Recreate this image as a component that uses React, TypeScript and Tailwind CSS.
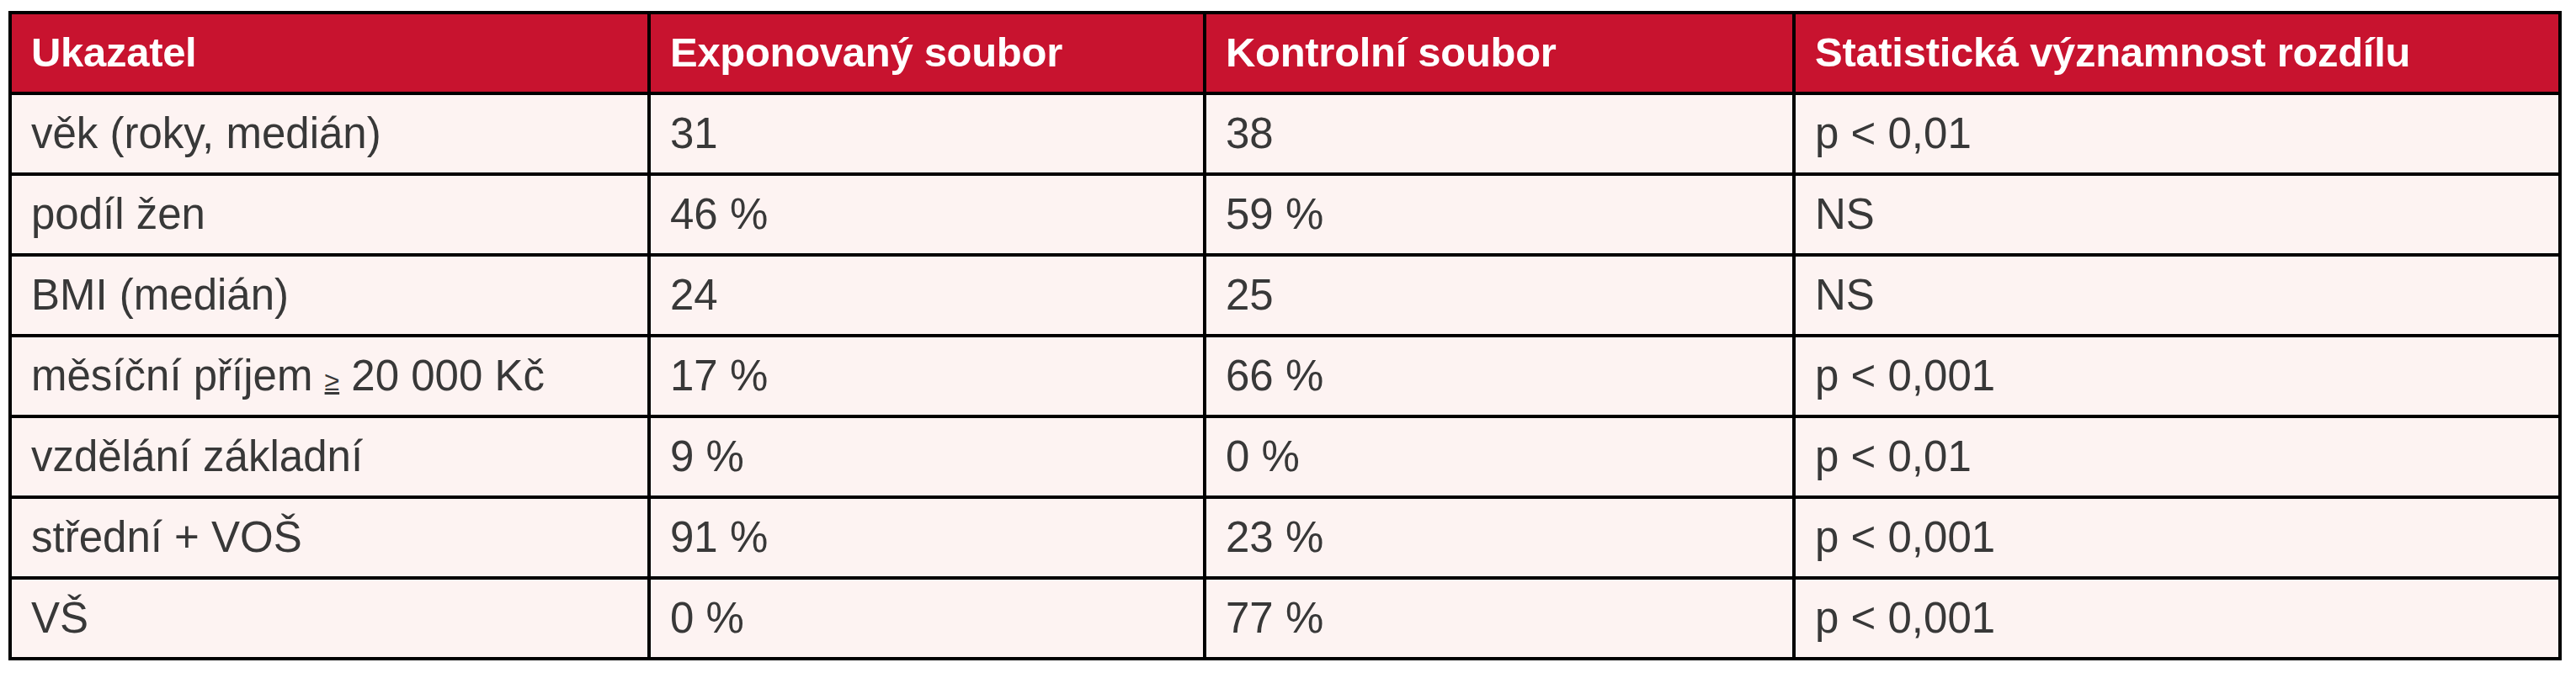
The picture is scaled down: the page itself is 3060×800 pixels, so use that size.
const header = ["Ukazatel", "Exponovaný soubor", "Kontrolní soubor", "Statistická významnost rozdílu"];

const rows: [React.ReactNode, string, string, string][] = [
  ["věk (roky, medián)", "31", "38", "p < 0,01"],
  ["podíl žen", "46 %", "59 %", "NS"],
  ["BMI (medián)", "24", "25", "NS"],
  [
    <span>
      měsíční příjem <span className="text-[32px] underline">≥</span> 20 000 Kč
    </span>,
    "17 %",
    "66 %",
    "p < 0,001",
  ],
  ["vzdělání základní", "9 %", "0 %", "p < 0,01"],
  ["střední + VOŠ", "91 %", "23 %", "p < 0,001"],
  ["VŠ", "0 %", "77 %", "p < 0,001"],
];

export default function App() {
  return (
    <div className="min-h-[800px] bg-white pl-[10px] pt-[13px] font-['Liberation_Sans',Arial,sans-serif]">
      <div className="grid w-fit grid-cols-[755px_656px_696px_906px] gap-[4px] bg-black p-[4px]">
        {header.map((h) => (
          <div
            key={h}
            className="flex h-[92px] items-center bg-[#c8132f] pl-[23px] text-[49px] font-bold tracking-[-0.3px] text-white"
          >
            {h}
          </div>
        ))}
        {rows.map((r, i) =>
          r.map((cell, j) => (
            <div
              key={`${i}-${j}`}
              className="flex h-[92px] items-center whitespace-nowrap bg-[#fdf3f2] pl-[23px] text-[51px] text-[#383838]"
            >
              {cell}
            </div>
          ))
        )}
      </div>
    </div>
  );
}
